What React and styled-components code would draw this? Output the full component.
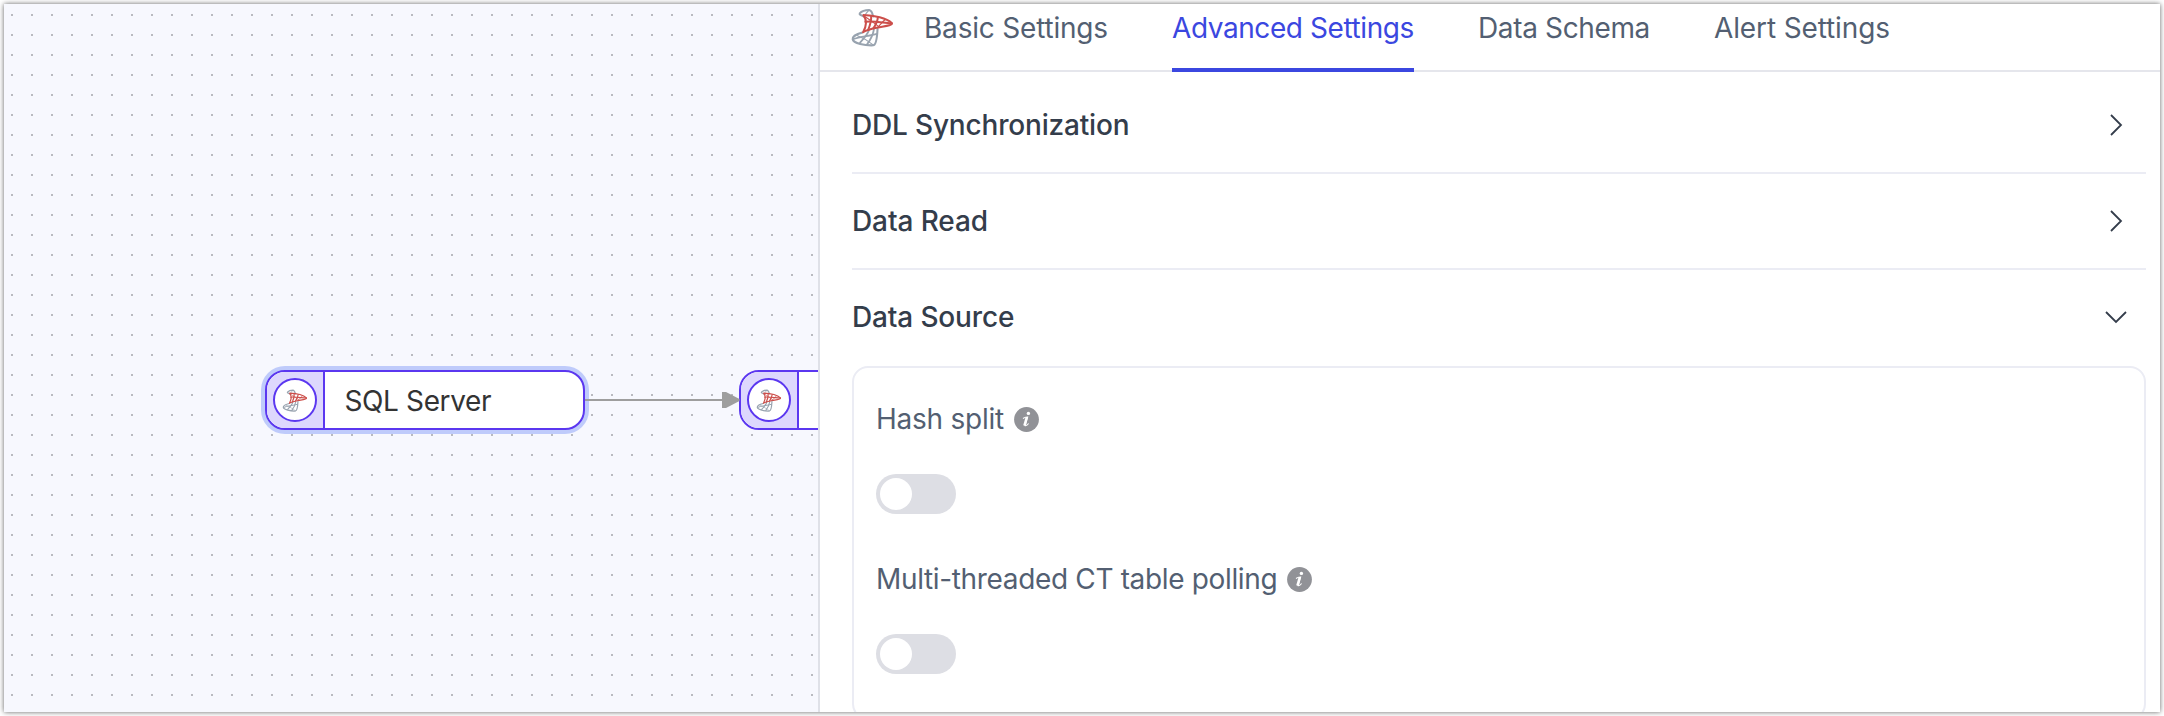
import React from "react";
import styled, { createGlobalStyle, css } from "styled-components";

const GlobalStyle = createGlobalStyle`
  * { box-sizing: border-box; }
  body {
    margin: 0;
    background: #fff;
    font-family: Inter, "Liberation Sans", sans-serif;
  }
`;

const Page = styled.div`
  height: 716px;
  padding: 4px;
  overflow: hidden;
`;

const Window = styled.div`
  display: flex;
  height: 708px;
  background: #fff;
  box-shadow: 0 0 5px rgba(0, 0, 0, 0.62);
`;

const Canvas = styled.section`
  position: relative;
  flex: 0 0 814px;
  overflow: hidden;
  background-color: #f7f8fe;
  background-image: conic-gradient(from 90deg at 18px 18px, #b9bac0 90deg, transparent 0);
  background-size: 20px 20px;
  background-position: -11px -8px;
`;

const Connector = styled.svg`
  position: absolute;
  left: 581px;
  top: 386px;
  overflow: visible;
`;

const NodeBox = styled.div`
  position: absolute;
  left: ${(p) => p.$x}px;
  top: ${(p) => p.$y}px;
  display: flex;
  width: 320px;
  height: 60px;
  border: 2px solid #5b37f0;
  border-radius: 20px;
  overflow: hidden;
  background: #fff;
  ${(p) =>
    p.$selected &&
    css`
      box-shadow: 0 0 0 4px #bfcbfb;
    `}
`;

const NodeBadge = styled.div`
  display: flex;
  flex: 0 0 58px;
  align-items: center;
  padding-left: 6px;
  border-right: 2px solid #5b37f0;
  background: #ddd7fd;
`;

const NodeCircle = styled.div`
  display: flex;
  align-items: center;
  justify-content: center;
  width: 44px;
  height: 44px;
  border: 2px solid #5b37f0;
  border-radius: 50%;
  background: #fff;
`;

const NodeName = styled.div`
  padding-left: 19.5px;
  font-size: 28px;
  line-height: 58px;
  letter-spacing: -0.38px;
  color: #333;
  white-space: nowrap;
`;

const Panel = styled.section`
  flex: 1;
  min-width: 0;
  overflow: hidden;
  border-left: 2px solid #dfe1e8;
`;

const TabBar = styled.nav`
  display: flex;
  align-items: flex-start;
  height: 68px;
  padding-left: 31px;
  border-bottom: 2px solid #e5e6ec;
`;

const TabLogo = styled.div`
  flex: 0 0 73px;
  height: 48px;
  padding-top: 4px;
`;

const Tab = styled.button`
  flex: 0 0 ${(p) => p.$w}px;
  height: 68px;
  margin-right: 64px;
  padding: 0 0 16px;
  border: 0;
  border-bottom: 4px solid ${(p) => (p.$active ? "#3b47e0" : "transparent")};
  background: none;
  font: inherit;
  font-size: 28px;
  letter-spacing: ${(p) => p.$track}px;
  text-align: left;
  white-space: nowrap;
  color: ${(p) => (p.$active ? "#3b47e0" : "#535f72")};
`;

const Sections = styled.div`
  padding: 6px 14px 0 32px;
`;

const SectionHead = styled.div`
  display: flex;
  align-items: center;
  justify-content: space-between;
  height: 96px;
  padding-right: 16px;
  border-bottom: 2px solid ${(p) => (p.$open ? "transparent" : "#ebecf4")};
  font-size: 28px;
  font-weight: 500;
  letter-spacing: ${(p) => p.$track}px;
  color: #343d4b;
`;

const Card = styled.div`
  height: 354px;
  padding: 19px 22px 0;
  border: 2px solid #ebecf4;
  border-radius: 16px;
`;

const Field = styled.div`
  display: flex;
  flex-direction: column;
  gap: 23px;
  height: 160px;
`;

const FieldLabel = styled.div`
  display: flex;
  align-items: center;
  gap: 10px;
  height: 64px;
  font-size: 28px;
  letter-spacing: ${(p) => p.$track}px;
  color: #535f72;
`;

const Switch = styled.div`
  width: 80px;
  height: 40px;
  padding: 4px;
  border-radius: 20px;
  background: #dddee4;
`;

const Knob = styled.div`
  width: 32px;
  height: 32px;
  border-radius: 50%;
  background: #fff;
`;

function SqlServerLogo({ width, height }) {
  return (
    <svg width={width} height={height} viewBox="18 24 128 116" fill="none" strokeLinejoin="round" strokeLinecap="round">
      <g stroke="#98a3af" strokeWidth="6.2">
        <path d="M56 49 C48 46 42 44 44 40 C50 33 63 30 72 30 C78 31 82 40 84 49" />
        <path d="M71 31 C66 36 62 39 60 46" strokeWidth="3.5" />
        <path d="M52 97 C36 101 22 109 23 117 C25 129 60 136 84 135 C92 134 96 108 97 86" />
        <path d="M24 117 C45 108 72 108 95 101" strokeWidth="5" />
        <path d="M45 127 C58 113 67 103 71 91" strokeWidth="5.5" />
        <path d="M66 132 C76 118 84 102 86 88" strokeWidth="5.5" />
        <path d="M36 106 C52 112 72 124 84 134" strokeWidth="3" />
      </g>
      <g stroke="#cc4f4b" strokeWidth="6">
        <path d="M55 45 C87 46 124 54 140 69 C142 76 119 78 98 82 C78 86 62 91 54 96 C64 78 66 60 55 45 Z" />
        <path d="M61 65 C84 62 106 67 139 70" />
        <path d="M78 48 C79 62 74 77 69 89" />
        <path d="M98 52 C97 64 91 75 85 84" />
        <path d="M60 50 C76 60 89 71 102 80" strokeWidth="3" />
        <path d="M119 59 C112 65 104 75 98 81" strokeWidth="3.5" />
      </g>
    </svg>
  );
}

function Chevron({ open }) {
  return (
    <svg width="28" height="28" viewBox="0 0 28 28" fill="none" stroke="#343d4b" strokeWidth="1.8">
      <path d={open ? "M4 9 L14 19 L24 9" : "M9 4 L19 14 L9 24"} />
    </svg>
  );
}

function InfoIcon() {
  return (
    <svg width="25" height="25" viewBox="0 0 25 25">
      <circle cx="12.5" cy="12.5" r="12.4" fill="#919297" />
      <circle cx="14.4" cy="6.4" r="1.7" fill="#fff" />
      <path d="M9 11.4 C10.6 10.3 12.2 9.9 13.6 10 L11.2 18.6 C12.2 19 13.6 17.8 14.6 16.5" fill="none" stroke="#fff" strokeWidth="1.2" />
      <path d="M12.8 10.2 L10.4 18.6" stroke="#fff" strokeWidth="2.4" />
    </svg>
  );
}

function FlowNode({ x, y, name, selected }) {
  return (
    <NodeBox $x={x} $y={y} $selected={selected}>
      <NodeBadge>
        <NodeCircle>
          <SqlServerLogo width={26} height={23} />
        </NodeCircle>
      </NodeBadge>
      {name && <NodeName>{name}</NodeName>}
    </NodeBox>
  );
}

function SwitchField({ label, track }) {
  return (
    <Field>
      <FieldLabel $track={track}>
        {label}
        <InfoIcon />
      </FieldLabel>
      <Switch role="switch" aria-checked="false">
        <Knob />
      </Switch>
    </Field>
  );
}

const tabs = [
  { label: "Basic Settings", width: 184, track: -0.2 },
  { label: "Advanced Settings", width: 242, track: -0.42, active: true },
  { label: "Data Schema", width: 172, track: -0.36 },
  { label: "Alert Settings", width: 176, track: -0.13 },
];

export default function App() {
  return (
    <Page>
      <GlobalStyle />
      <Window>
        <Canvas>
          <FlowNode x={261} y={366} name="SQL Server" selected />
          <FlowNode x={735} y={366} />
          <Connector width="156" height="20">
            <path d="M0 10 H140" stroke="#9e9e9e" strokeWidth="2" />
            <path d="M137 2 H141 L154.5 9 V11 L141 18 H137 Z" fill="#9e9e9e" />
          </Connector>
        </Canvas>
        <Panel>
          <TabBar>
            <TabLogo>
              <SqlServerLogo width={43} height={39} />
            </TabLogo>
            {tabs.map((t) => (
              <Tab key={t.label} $w={t.width} $track={t.track} $active={t.active}>
                {t.label}
              </Tab>
            ))}
          </TabBar>
          <Sections>
            <SectionHead $track={-0.18}>
              DDL Synchronization
              <Chevron />
            </SectionHead>
            <SectionHead $track={-0.1}>
              Data Read
              <Chevron />
            </SectionHead>
            <SectionHead $track={-0.15} $open>
              Data Source
              <Chevron open />
            </SectionHead>
            <Card>
              <SwitchField label="Hash split" track={-0.24} />
              <SwitchField label="Multi-threaded CT table polling" track={-0.345} />
            </Card>
          </Sections>
        </Panel>
      </Window>
    </Page>
  );
}
